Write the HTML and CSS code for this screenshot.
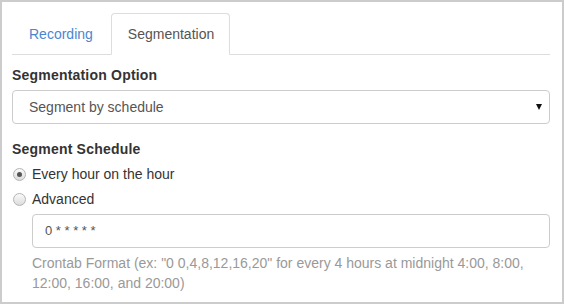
FILE: index.html
```html
<!DOCTYPE html>
<html lang="en">
<head>
    <meta charset="UTF-8">
    <title>Segmentation</title>
    <link rel="stylesheet" href="styles.css">
</head>
<body>
    <div class="panel">
        <ul class="tabs">
            <li class="tab"><a href="#">Recording</a></li>
            <li class="tab active"><a href="#">Segmentation</a></li>
        </ul>

        <div class="form-group">
            <label class="field-label">Segmentation Option</label>
            <div class="select-wrap">
                <div class="select">Segment by schedule</div>
                <span class="caret"></span>
            </div>
        </div>

        <div class="form-group">
            <label class="field-label">Segment Schedule</label>
            <div class="radio">
                <span class="radio-dot checked"></span>
                <span>Every hour on the hour</span>
            </div>
            <div class="radio">
                <span class="radio-dot"></span>
                <span>Advanced</span>
            </div>
            <div class="indent">
                <div class="text-input">0 * * * * *</div>
                <p class="help">Crontab Format (ex: "0 0,4,8,12,16,20" for every 4 hours at midnight 4:00, 8:00, 12:00, 16:00, and 20:00)</p>
            </div>
        </div>
    </div>
</body>
</html>
```

FILE: styles.css
```css
* {
    box-sizing: border-box;
}
body {
    margin: 0;
    font-family: "Liberation Sans", Arial, sans-serif;
    font-size: 14px;
    line-height: 20px;
    color: #333;
}
.panel {
    width: 564px;
    height: 304px;
    border: 2px solid #ccc;
    background: #fff;
    padding: 11px 12px 0 10px;
    overflow: hidden;
}
.tabs {
    display: flex;
    list-style: none;
    margin: 0 0 10px;
    padding: 0;
    border-bottom: 1px solid #ddd;
}
.tab {
    margin-right: 2px;
    margin-bottom: -1px;
}
.tab a {
    display: block;
    padding: 10px 15px 10px 16px;
    border: 1px solid transparent;
    border-radius: 4px 4px 0 0;
    color: #4a86cf;
    text-decoration: none;
}
.tab.active a {
    color: #555;
    background: #fff;
    border-color: #ddd #ddd transparent;
}
.form-group {
    margin-bottom: 15px;
}
.field-label {
    display: block;
    font-weight: bold;
    margin-bottom: 5px;
    letter-spacing: 0.2px;
}
.select-wrap {
    position: relative;
}
.select {
    height: 34px;
    padding: 6px 16px;
    border: 1px solid #ccc;
    border-radius: 4px;
    color: #555;
}
.caret {
    position: absolute;
    right: 8px;
    top: 14px;
    width: 0;
    height: 0;
    border-top: 6px solid #111;
    border-left: 3.5px solid transparent;
    border-right: 3.5px solid transparent;
}
.radio {
    display: flex;
    align-items: center;
    margin-bottom: 5px;
}
.radio-dot {
    width: 13px;
    height: 13px;
    margin: 0 6px 0 1px;
    border: 1px solid #b4b4b4;
    border-radius: 50%;
    background: linear-gradient(#fafafa, #dcdcdc);
    display: flex;
    align-items: center;
    justify-content: center;
}
.radio-dot.checked::after {
    content: "";
    width: 5px;
    height: 5px;
    border-radius: 50%;
    background: #555;
}
.indent {
    padding-left: 20px;
}
.text-input {
    height: 34px;
    padding: 6px 12px;
    border: 1px solid #ccc;
    border-radius: 4px;
    color: #555;
    font-size: 13px;
}
.help {
    margin: 5px 0 0;
    color: #999;
}
```
